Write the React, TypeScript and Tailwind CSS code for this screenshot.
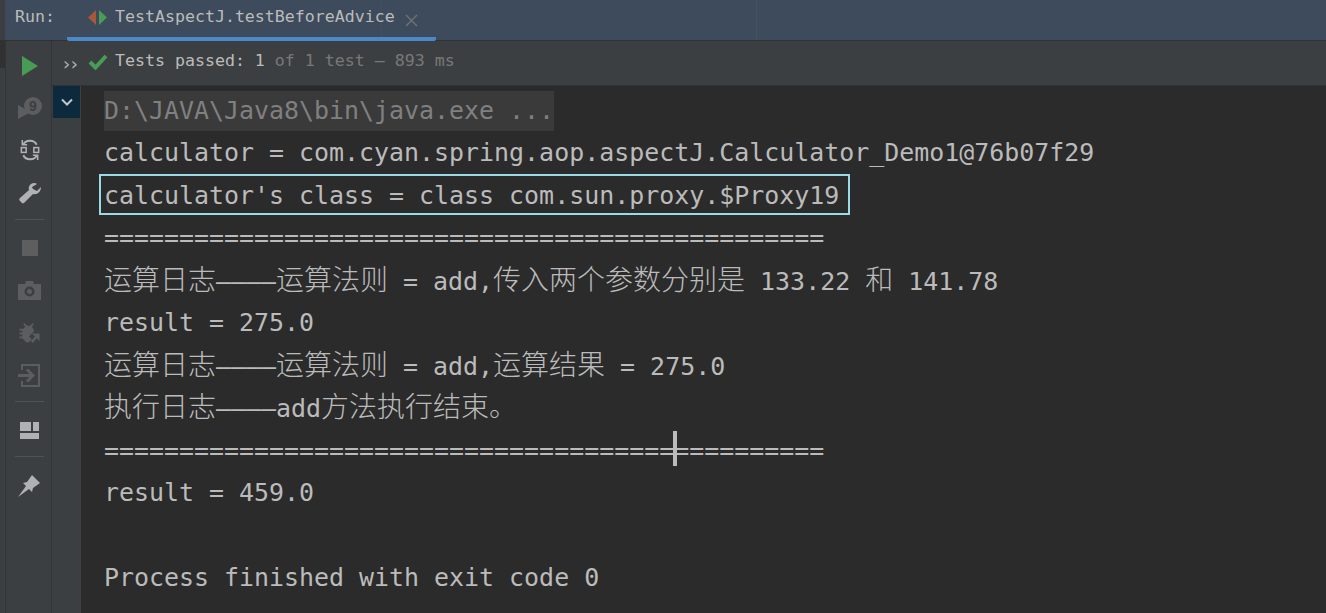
import React from 'react';

const MONO = 'font-["DejaVu_Sans_Mono","Noto_Sans_CJK_SC",monospace]';

const Rule = () => <div className="w-[29px] h-px bg-[#4f5356] mx-auto" />;

// CJK runs sit wider than the latin mono cells in the console
const Cjk = ({ children }: { children: React.ReactNode }) => (
  <span className="text-[28px] font-light">{children}</span>
);

// Toolbar icons, drawn by hand from the IDE's icon set
const RunIcon = () => (
  <svg width="16" height="20" viewBox="0 0 16 20"><polygon points="0,0 16,10 0,20" fill="#499c54" /></svg>
);
const RerunFailedIcon = () => (
  <svg width="24" height="22" viewBox="0 0 24 22">
    <polygon points="0,8 0,22 13,15" fill="#5b5d5f" />
    <circle cx="15" cy="9" r="9" fill="#5b5d5f" />
    <text x="15" y="14" textAnchor="middle" fontSize="14" fontWeight="700" fill="#3c3f41" fontFamily="Liberation Sans, sans-serif">9</text>
  </svg>
);
const ToggleIcon = () => (
  <svg width="20" height="24" viewBox="0 0 20 25" fill="none" stroke="#afb1b3" strokeWidth="2">
    <path d="M3 7 C5 2 14 1 17 7" />
    <path d="M17 18 C15 23 6 24 3 18" />
    <path d="M2 2 V7 H7" strokeWidth="1.6" />
    <path d="M18 23 V18 H13" strokeWidth="1.6" />
    <rect x="1" y="10" width="5" height="5" strokeWidth="1.6" />
    <rect x="14" y="10" width="5" height="5" strokeWidth="1.6" />
  </svg>
);
const WrenchIcon = () => (
  <svg width="22" height="22" viewBox="0 0 22 22">
    <path d="M15 1 C11 1 9 5 10 8 L1 16 C0 17 0 18 1 19 L3 21 C4 22 5 21 6 20 L14 12 C18 13 22 10 22 5 L18 9 L14 7 L13 5 L18 2 C17 1 16 1 15 1 Z" fill="#afb1b3" />
  </svg>
);
const StopIcon = () => <div className="w-4 h-4 bg-[#5c5e60]" />;
const CameraIcon = () => (
  <svg width="23" height="19" viewBox="0 0 23 19">
    <path fillRule="evenodd" d="M0 3 H7 L8 0 H15 L16 3 H23 V19 H0 Z M11.5 5.5 A5 5 0 1 0 11.5 15.5 A5 5 0 1 0 11.5 5.5 Z M11.5 8 A2.5 2.5 0 1 1 11.5 13 A2.5 2.5 0 1 1 11.5 8 Z" fill="#5b5d5f" />
  </svg>
);
const BugIcon = () => (
  <svg width="23" height="23" viewBox="0 0 23 24">
    <path d="M6 1 L9 4 H12 L15 1 L16 2 L14 5 L16 8 V10 L11 15 L14 18 L11 21 H8 L4 17 H1 V15 H4 V13 H1 V11 H4 V9 H1 V7 H5 L7 5 L5 2 Z" fill="#5b5d5f" />
    <path d="M14 12 H22 V20 L19 17 L15 22 L13 20 L17 15 Z" fill="#5b5d5f" />
  </svg>
);
const ExportIcon = () => (
  <svg width="23" height="23" viewBox="0 0 23 23" fill="none" stroke="#5b5d5f" strokeWidth="2">
    <path d="M4 6 V1 H21 V22 H4 V17" />
    <path d="M0 11.5 H13" strokeWidth="3" />
    <path d="M9 5.5 L15 11.5 L9 17.5" strokeWidth="3" />
  </svg>
);
const LayoutIcon = () => (
  <svg width="19" height="17" viewBox="0 0 19 17" fill="#afb1b3">
    <rect x="0" y="0" width="11" height="9" />
    <rect x="13" y="0" width="6" height="9" />
    <rect x="0" y="11" width="19" height="6" />
  </svg>
);
const PinIcon = () => (
  <svg width="23" height="23" viewBox="0 0 23 23">
    <path d="M0 23 L8 12 L5 9 L9 8 L14 1 L22 9 L15 14 L14 18 L11 15 Z" fill="#afb1b3" />
  </svg>
);
const TestIcon = () => (
  <svg width="19" height="15" viewBox="0 0 19 15">
    <polygon points="8,0 0,7.5 8,15" fill="#a5583a" />
    <polygon points="11,0 19,7.5 11,15" fill="#499c54" />
  </svg>
);

const lines: React.ReactNode[] = [
  'calculator = com.cyan.spring.aop.aspectJ.Calculator_Demo1@76b07f29',
  <span className="relative">
    calculator's class = class com.sun.proxy.$Proxy19
    <span className="absolute left-[-5px] right-[-11px] top-[-7px] bottom-[-5px] border-2 border-[#9bdbe8]" />
  </span>,
  '================================================',
  <>
    <Cjk>运算日志</Cjk>————<Cjk>运算法则</Cjk> = add,<Cjk>传入两个参数分别是</Cjk> 133.22 <Cjk>和</Cjk> 141.78
  </>,
  'result = 275.0',
  <>
    <Cjk>运算日志</Cjk>————<Cjk>运算法则</Cjk> = add,<Cjk>运算结果</Cjk> = 275.0
  </>,
  <>
    <Cjk>执行日志</Cjk>————add<Cjk>方法执行结束。</Cjk>
  </>,
  <span className="relative">
    ================================================
    <span className="absolute left-[569px] top-[-5px] w-[4px] h-[35px] bg-[#bbbbbb]" />
  </span>,
  'result = 459.0',
  '\u00a0',
  'Process finished with exit code 0',
];

export default function App() {
  return (
    <div className={`w-[1326px] h-[613px] overflow-hidden flex flex-col bg-[#2b2b2b] ${MONO}`}>
      {/* Run tab strip */}
      <div className="h-[41px] shrink-0 flex bg-[#3d4b5c] border-b border-[#323232]">
        <div className="w-[5px] bg-[#3c3f41]" />
        <div className="w-[62px] pt-[7px] pl-[10px] text-[16.6px] leading-[20px] text-[#bbbbbb]">Run:</div>
        <div className="relative w-[369px] h-[41px] border-b-4 border-[#4a88c7] flex items-start pt-[10px] pl-[21px] gap-[8px] rounded-b-[2px] shrink-0">
          <span className="absolute left-[314px] top-0 bottom-0 w-px bg-[#424f5f]" />
          <TestIcon />
          <span className="relative text-[16.6px] leading-[20px] -mt-[3px] text-[#bbbbbb]">TestAspectJ.testBeforeAdvice</span>
          <svg className="mt-[4px] ml-[2px]" width="13" height="13" viewBox="0 0 13 13" stroke="#6f7479" strokeWidth="1.3"><path d="M1 1 L12 12 M12 1 L1 12" /></svg>
        </div>
        <div className="w-[321px] border-r border-[#45525f]" />
      </div>

      <div className="flex-1 flex min-h-0">
        {/* Far-left window edge */}
        <div className="w-[5px] shrink-0 bg-[#3c3f41]">
          <div className="h-[27px] bg-[#2f3133]" />
        </div>

        {/* Left toolbar */}
        <div className="w-[47px] shrink-0 bg-[#3c3f41] border-x border-[#323437] flex flex-col items-center pt-[15px] pl-[2px]">
          <div className="h-[20px] flex items-center"><RunIcon /></div>
          <div className="h-[22px] mt-[21px] flex items-center"><RerunFailedIcon /></div>
          <div className="h-[24px] mt-[19px] flex items-center"><ToggleIcon /></div>
          <div className="h-[22px] mt-[20px] flex items-center"><WrenchIcon /></div>
          <div className="w-full mt-[15px]"><Rule /></div>
          <div className="h-[16px] mt-[20px] flex items-center"><StopIcon /></div>
          <div className="h-[19px] mt-[25px] flex items-center"><CameraIcon /></div>
          <div className="h-[23px] mt-[22px] flex items-center"><BugIcon /></div>
          <div className="h-[23px] mt-[19px] flex items-center"><ExportIcon /></div>
          <div className="w-full mt-[14px]"><Rule /></div>
          <div className="h-[17px] mt-[20px] flex items-center"><LayoutIcon /></div>
          <div className="w-full mt-[17px]"><Rule /></div>
          <div className="h-[23px] mt-[17px] flex items-center"><PinIcon /></div>
        </div>

        <div className="flex-1 flex flex-col min-w-0">
          {/* Test status */}
          <div className="h-[45px] shrink-0 bg-[#3c3f41] border-b border-[#323232] flex items-center pl-[9px]">
            <span className="text-[18px] tracking-[-3px] text-[#afb1b3] w-[27px]">››</span>
            <svg className="-mt-[3px]" width="20" height="16" viewBox="0 0 20 16"><path d="M2 8 L7.5 13.5 L18 2" fill="none" stroke="#499c54" strokeWidth="4" /></svg>
            <span className="ml-[7px] -mt-[3px] text-[16.6px] text-[#bbbbbb] whitespace-pre">Tests passed: 1 <span className="text-[#787878]">of 1 test – 893 ms</span></span>
          </div>

          <div className="flex-1 flex min-h-0">
            {/* Scroll-to-end gutter */}
            <div className="w-[29px] shrink-0 bg-[#3c3f41] pl-px">
              <div className="w-[27px] h-[32px] bg-[#0d293e] flex items-center justify-center">
                <svg width="14" height="9" viewBox="0 0 14 9" fill="none" stroke="#c4c7c9" strokeWidth="2"><path d="M2 1.5 L7 6.5 L12 1.5" /></svg>
              </div>
            </div>

            {/* Console output */}
            <div className="flex-1 pt-[3.6px] pl-[23px] text-[24.93px] leading-[42.5px] text-[#bbbbbb] whitespace-pre">
              <div className="h-[42.5px]"><span className="inline-block bg-[#3a3a3a] text-[#808080] h-[40px] leading-[40px]">D:\JAVA\Java8\bin\java.exe ...</span></div>
              {lines.map((line, i) => (
                <div key={i} className="h-[42.5px]">{line}</div>
              ))}
            </div>
          </div>
        </div>
      </div>
    </div>
  );
}
